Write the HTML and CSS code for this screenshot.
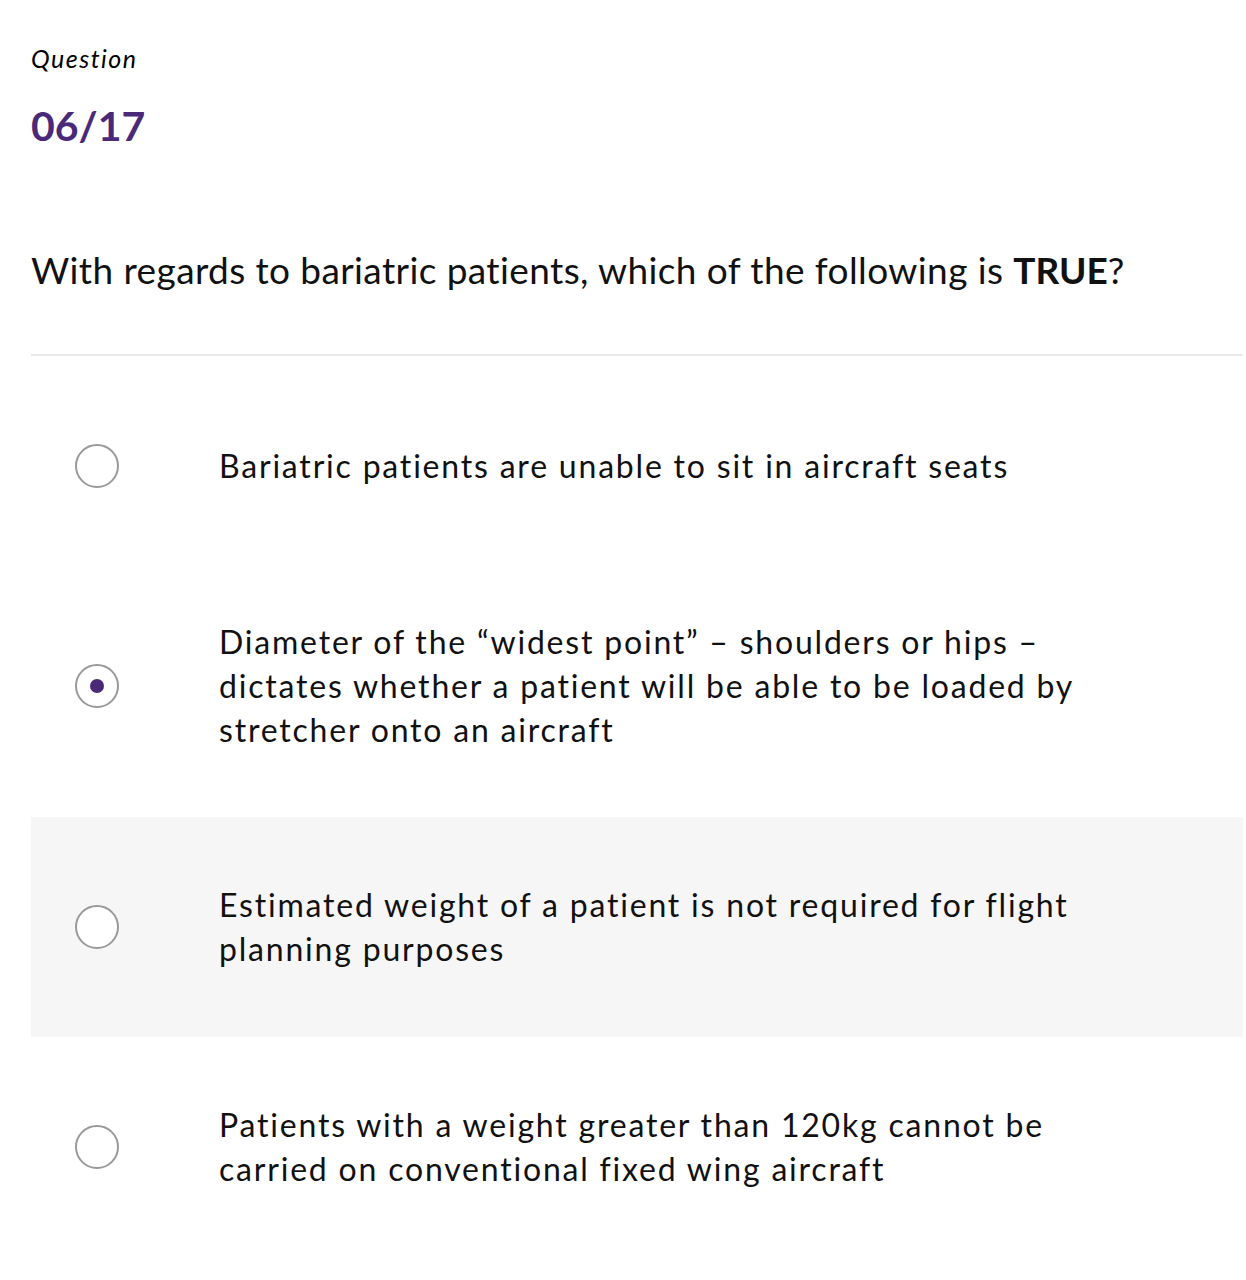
FILE: index.html
```html
<!DOCTYPE html>
<html lang="en">
<head>
<meta charset="utf-8">
<title>Question 06/17</title>
<link rel="stylesheet" href="styles.css">
</head>
<body>
<main class="quiz">
  <header class="quiz-head">
    <p class="label">Question</p>
    <p class="counter">06/17</p>
  </header>
  <h1 class="question">With regards to bariatric patients, which of the following is <strong>TRUE</strong>?</h1>
  <ul class="options">
    <li class="option">
      <span class="radio"></span>
      <span class="text">Bariatric patients are unable to sit in aircraft seats</span>
    </li>
    <li class="option option-tall">
      <span class="radio checked"></span>
      <span class="text">Diameter of the “widest point” – shoulders or hips – dictates whether a patient will be able to be loaded by stretcher onto an aircraft</span>
    </li>
    <li class="option hover">
      <span class="radio"></span>
      <span class="text">Estimated weight of a patient is not required for flight planning purposes</span>
    </li>
    <li class="option">
      <span class="radio"></span>
      <span class="text">Patients with a weight greater than 120kg cannot be carried on conventional fixed wing aircraft</span>
    </li>
  </ul>
</main>
</body>
</html>
```

FILE: styles.css
```css
* { box-sizing: border-box; }
html, body { margin: 0; padding: 0; background: #fff; }
body {
  font-family: "Lato", "Open Sans", sans-serif;
  color: #111;
}
.quiz {
  padding: 0 3px 0 31px;
}
.quiz-head {
  padding-top: 41px;
}
.label {
  margin: 0;
  font-style: italic;
  font-size: 25px;
  line-height: 34px;
  letter-spacing: 1.5px;
  color: #000;
}
.counter {
  margin: 26px 0 0;
  font-weight: 700;
  font-size: 41px;
  line-height: 50px;
  color: #4a2a78;
}
.question {
  margin: 94px 0 0;
  font-weight: 400;
  font-size: 37px;
  line-height: 50px;
  letter-spacing: 0.4px;
  color: #111;
  padding-bottom: 59px;
  border-bottom: 2px solid #e8e8e8;
}
.question strong { font-weight: 700; letter-spacing: 0; }
.options {
  list-style: none;
  margin: 0;
  padding: 0;
}
.option {
  display: flex;
  align-items: center;
  min-height: 220px;
}
.option-tall {
  min-height: 241px;
  padding-bottom: 21px;
}
.option.hover { background: #f6f6f6; }
.radio {
  flex: none;
  width: 44px;
  height: 44px;
  margin-left: 44px;
  margin-right: 100px;
  border: 2px solid #999;
  border-radius: 50%;
  display: flex;
  align-items: center;
  justify-content: center;
  background: #fff;
}
.radio.checked::after {
  content: "";
  width: 14px;
  height: 14px;
  border-radius: 50%;
  background: #4a2a78;
}
.text {
  font-size: 32px;
  line-height: 44px;
  letter-spacing: 1.8px;
  color: #111;
  max-width: 900px;
}
```
